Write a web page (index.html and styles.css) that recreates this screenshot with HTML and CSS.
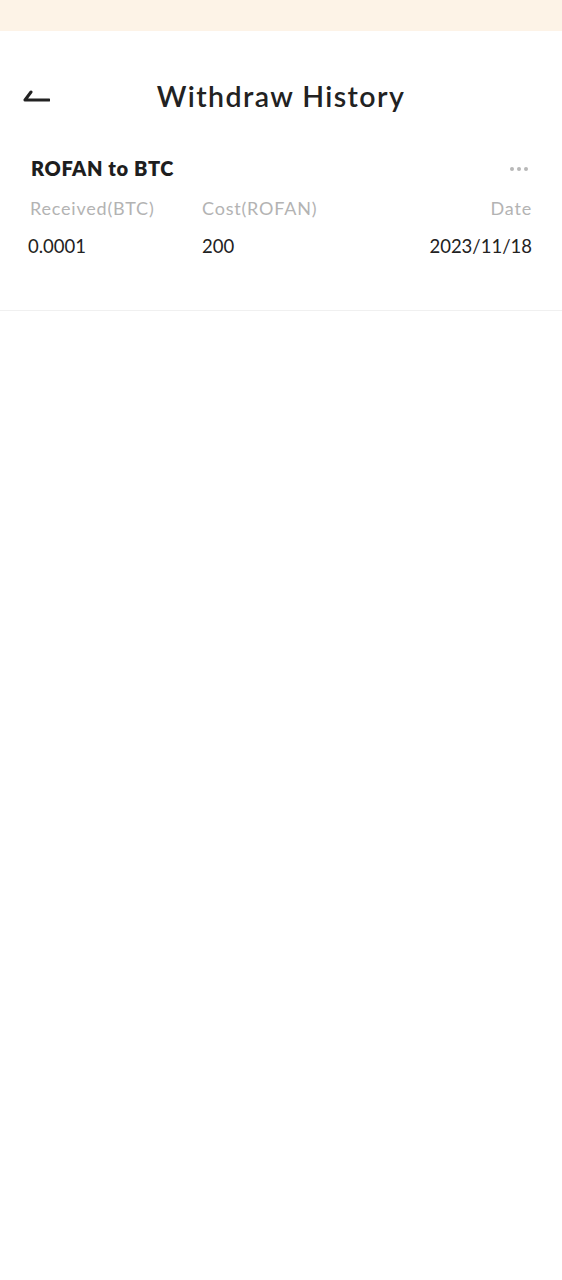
FILE: index.html
```html
<!DOCTYPE html>
<html>
<head>
<meta charset="utf-8">
<link rel="stylesheet" href="styles.css">
</head>
<body>
<div class="status"></div>
<header class="header">
  <button class="back" aria-label="Back">
    <svg width="28" height="16" viewBox="0 0 28 16"><path d="M3 13 H27 M3 13 L9 5" stroke="#222" stroke-width="3" fill="none" stroke-linecap="round"/></svg>
  </button>
  <h1 class="title">Withdraw History</h1>
</header>
<section class="card">
  <div class="card-top">
    <div class="card-title">ROFAN to BTC</div>
    <div class="more"><span></span><span></span><span></span></div>
  </div>
  <div class="grid labels">
    <div class="first">Received(BTC)</div>
    <div>Cost(ROFAN)</div>
    <div class="right">Date</div>
  </div>
  <div class="grid values">
    <div>0.0001</div>
    <div>200</div>
    <div class="right">2023/11/18</div>
  </div>
</section>
</body>
</html>
```
FILE: styles.css
```css
* { box-sizing: border-box; }
body {
  margin: 0;
  background: #fff;
  font-family: Lato, "Noto Sans", sans-serif;
  color: #222;
}
.status {
  height: 31px;
  background: #fdf3e7;
}
.header {
  position: relative;
  height: 133px;
  display: flex;
  align-items: center;
  justify-content: center;
}
.back {
  position: absolute;
  left: 22px;
  top: 56px;
  border: 0;
  background: none;
  padding: 0;
  line-height: 0;
}
.title {
  margin: 0;
  font-size: 28.5px;
  font-weight: 600;
  letter-spacing: 1.4px;
  color: #222;
  position: relative;
  top: -2px;
}
.card {
  padding: 0 30px 0 28px;
  height: 147px;
  border-bottom: 1px solid #f0f0f0;
}
.card-top {
  display: flex;
  justify-content: space-between;
  align-items: center;
  padding-left: 3px;
  height: 10px;
}
.card-title {
  font-size: 20px;
  font-weight: 800;
  letter-spacing: 0.6px;
  color: #1e1e1e;
  margin-top: -2px;
}
.more {
  display: flex;
  gap: 3px;
  margin-right: 4px;
}
.more span {
  width: 4px;
  height: 4px;
  border-radius: 50%;
  background: #b8b8b8;
}
.grid {
  display: grid;
  grid-template-columns: 174px 1fr 1fr;
}
.right { text-align: right; }
.labels {
  margin-top: 23px;
  font-size: 18px;
  letter-spacing: 0.8px;
  color: #b3b3b3;
}
.labels .first { padding-left: 2px; }
.values {
  margin-top: 16px;
  font-size: 18.5px;
  letter-spacing: 0;
  color: #222;
}
```
